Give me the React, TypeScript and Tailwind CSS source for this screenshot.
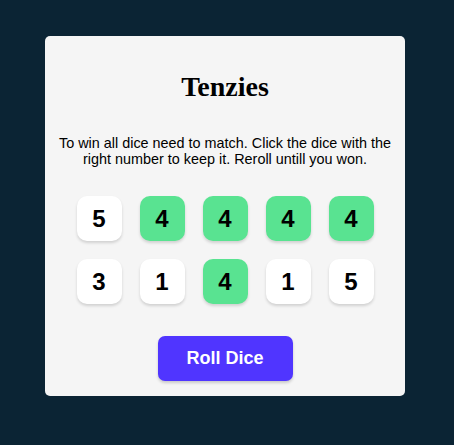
const DICE = [
  { value: 5, held: false },
  { value: 4, held: true },
  { value: 4, held: true },
  { value: 4, held: true },
  { value: 4, held: true },
  { value: 3, held: false },
  { value: 1, held: false },
  { value: 4, held: true },
  { value: 1, held: false },
  { value: 5, held: false },
];

function Die({ value, held }: { value: number; held: boolean }) {
  return (
    <button
      className={`w-[45px] h-[45px] rounded-[10px] flex items-center justify-center text-[24px] font-bold text-black shadow-[0_2px_3px_rgba(0,0,0,0.15)] ${
        held ? "bg-[#59E391]" : "bg-white"
      }`}
    >
      {value}
    </button>
  );
}

export default function App() {
  return (
    <div className="min-h-[445px] bg-[#0B2434] pt-[36px] font-['Liberation_Sans',Arial,sans-serif]">
      <main className="ml-[45px] w-[360px] h-[360px] bg-[#F5F5F5] rounded-[5px] flex flex-col items-center">
        <h1 className="mt-[33px] text-[28px] font-bold leading-[36px] font-['Liberation_Serif','Times_New_Roman',serif]">
          Tenzies
        </h1>

        <p className="mt-[30px] px-[10px] text-[14.4px] leading-[16px] text-center text-black">
          To win all dice need to match. Click the dice with the right number to keep it. Reroll untill you won.
        </p>

        <div className="mt-[29px] grid grid-cols-5 gap-x-[18px] gap-y-[18px]">
          {DICE.map((d, i) => (
            <Die key={i} value={d.value} held={d.held} />
          ))}
        </div>

        <button className="mt-[32px] w-[135px] h-[45px] rounded-[7px] bg-[#5035FF] text-white text-[18px] font-bold shadow-[0_2px_3px_rgba(0,0,0,0.18)]">
          Roll Dice
        </button>
      </main>
    </div>
  );
}
